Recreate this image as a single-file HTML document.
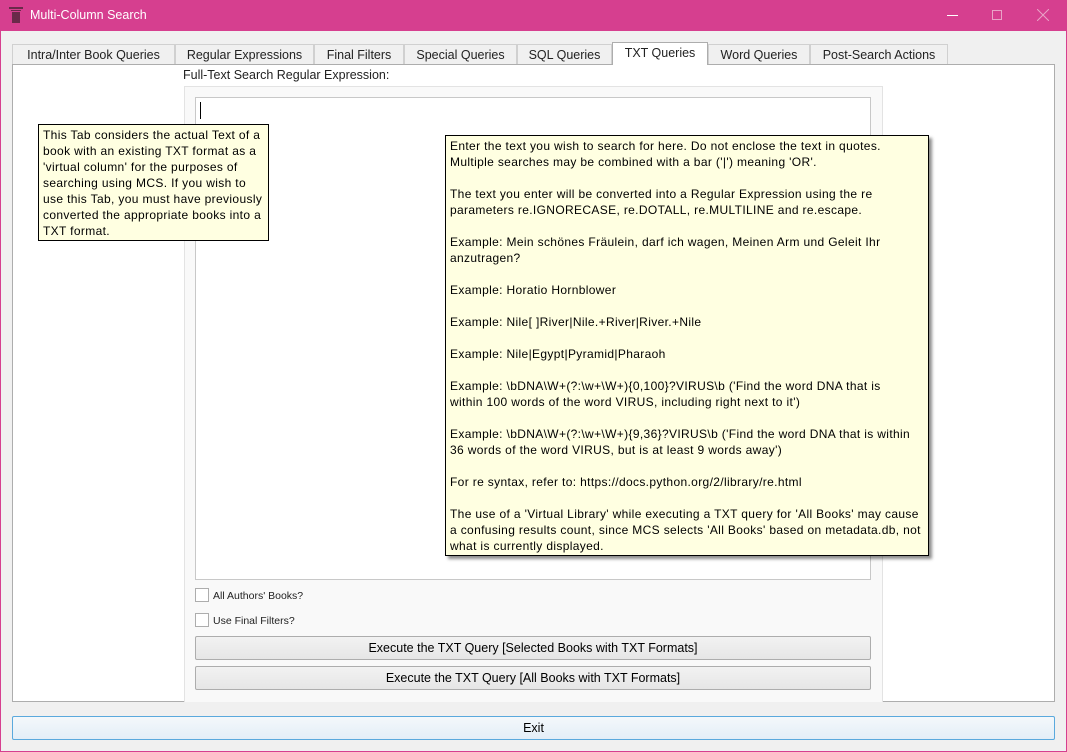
<!DOCTYPE html>
<html><head><style>
*{margin:0;padding:0;box-sizing:border-box}
body{width:1067px;height:752px;background:#f0f0f0;font-family:"Liberation Sans",sans-serif;font-size:12px;color:#000;position:relative;overflow:hidden}
.abs{position:absolute}
.title{left:0;top:0;width:1067px;height:31px;background:#d63f8f;color:#fff;font-size:12.5px}
.tab{position:absolute;top:44px;height:21px;border:1px solid #d0d0d0;border-bottom:none;background:#f0f0f0;text-align:center;line-height:21px;font-size:12.5px;color:#222}
.tab.sel{top:42px;height:23px;background:#fff;border-color:#adadad;z-index:2}
.tip{background:#ffffe1;border:1px solid #000;font-size:12px;line-height:16px;color:#000;white-space:nowrap;letter-spacing:0.35px;overflow:hidden}
.btn{position:absolute;left:195px;width:676px;height:24px;border:1px solid #adadad;border-radius:2px;background:linear-gradient(#f2f2f2,#e6e6e6);text-align:center;line-height:22px;font-size:12.5px}
.cb{position:absolute;left:195px;width:14px;height:14px;border:1px solid #adadad;background:#fff}
.cbl{position:absolute;left:213px;font-size:10.5px;color:#222}
</style></head><body>
<div class="abs" style="left:0;top:0;width:1067px;height:752px;border:1px solid #d63f8f;z-index:10;pointer-events:none"></div>
<div class="abs title">
 <svg class="abs" style="left:9px;top:7px" width="14" height="16"><rect x="0" y="0" width="14" height="2" fill="#6a2a4a"/><rect x="2" y="3" width="10" height="1" fill="#6a2a4a"/><rect x="3" y="5" width="8" height="11" fill="#6a2a4a"/></svg>
 <div class="abs" style="left:30px;top:8px">Multi-Column Search</div>
 <div class="abs" style="left:947px;top:15px;width:11px;height:1px;background:#fff"></div>
 <div class="abs" style="left:992px;top:10px;width:10px;height:10px;border:1px solid #e9a3c7"></div>
 <svg class="abs" style="left:1037px;top:9px" width="12" height="12"><path d="M0 0L12 12M12 0L0 12" stroke="#e9a3c7" stroke-width="1"/></svg>
</div>
<div class="tab" style="left:12px;width:163px">Intra/Inter Book Queries</div>
<div class="tab" style="left:175px;width:139px">Regular Expressions</div>
<div class="tab" style="left:314px;width:90px">Final Filters</div>
<div class="tab" style="left:404px;width:113px">Special Queries</div>
<div class="tab" style="left:517px;width:95px">SQL Queries</div>
<div class="tab sel" style="left:612px;width:96px">TXT Queries</div>
<div class="tab" style="left:708px;width:102px">Word Queries</div>
<div class="tab" style="left:810px;width:138px">Post-Search Actions</div>
<div class="abs" style="left:12px;top:64px;width:1043px;height:638px;background:#fff;border:1px solid #adadad"></div>
<div class="abs" style="left:183px;top:68px;font-size:12.5px;color:#222">Full-Text Search Regular Expression:</div>
<div class="abs" style="left:184px;top:86px;width:699px;height:616px;background:#f9f9f9;border:1px solid #e3e3e3;border-bottom:none"></div>
<div class="abs" style="left:195px;top:97px;width:676px;height:483px;background:#fff;border:1px solid #c8c8c8"></div>
<div class="abs" style="left:200px;top:102px;width:1px;height:17px;background:#000"></div>
<div class="cb" style="top:588px"></div><div class="cbl" style="top:590px">All Authors' Books?</div>
<div class="cb" style="top:613px"></div><div class="cbl" style="top:615px">Use Final Filters?</div>
<div class="btn" style="top:636px">Execute the TXT Query [Selected Books with TXT Formats]</div>
<div class="btn" style="top:666px">Execute the TXT Query [All Books with TXT Formats]</div>
<div class="abs" style="left:12px;top:716px;width:1043px;height:24px;border:1px solid #5aa9dd;border-radius:2px;background:linear-gradient(#f4f8fb,#e3eef7);text-align:center;line-height:22px;font-size:12.5px">Exit</div>
<div class="abs tip" style="left:38px;top:124px;width:231px;height:117px;padding:2px 4px">This Tab considers the actual Text of a<br>book with an existing TXT format as a<br>'virtual column' for the purposes of<br>searching using MCS. If you wish to<br>use this Tab, you must have previously<br>converted the appropriate books into a<br>TXT format.</div>
<div class="abs tip" style="left:445px;top:135px;width:484px;height:421px;padding:2px 4px;box-shadow:3px 3px 3px rgba(0,0,0,.45)">Enter the text you wish to search for here. Do not enclose the text in quotes.<br>Multiple searches may be combined with a bar ('|') meaning 'OR'.<br><br>The text you enter will be converted into a Regular Expression using the re<br>parameters re.IGNORECASE, re.DOTALL, re.MULTILINE and re.escape.<br><br>Example: Mein schönes Fräulein, darf ich wagen, Meinen Arm und Geleit Ihr<br>anzutragen?<br><br>Example: Horatio Hornblower<br><br>Example: Nile[ ]River|Nile.+River|River.+Nile<br><br>Example: Nile|Egypt|Pyramid|Pharaoh<br><br>Example: \bDNA\W+(?:\w+\W+){0,100}?VIRUS\b ('Find the word DNA that is<br>within 100 words of the word VIRUS, including right next to it')<br><br>Example: \bDNA\W+(?:\w+\W+){9,36}?VIRUS\b ('Find the word DNA that is within<br>36 words of the word VIRUS, but is at least 9 words away')<br><br>For re syntax, refer to: https://docs.python.org/2/library/re.html<br><br>The use of a 'Virtual Library' while executing a TXT query for 'All Books' may cause<br>a confusing results count, since MCS selects 'All Books' based on metadata.db, not<br>what is currently displayed.</div>
</body></html>
